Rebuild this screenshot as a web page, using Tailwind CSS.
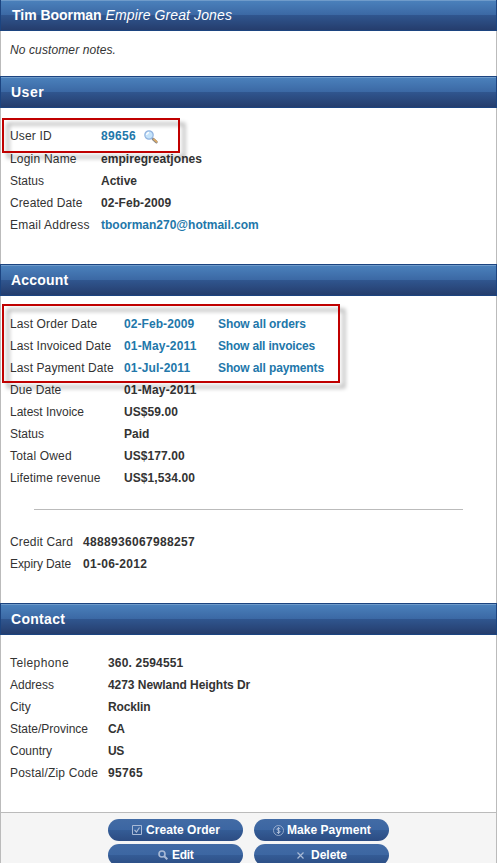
<!DOCTYPE html>
<html lang="en">
<head>
<meta charset="utf-8">
<title>Tim Boorman</title>
<script src="https://cdn.jsdelivr.net/npm/@tailwindcss/browser@4"></script>
</head>
<body class="bg-white">
<div class="h-[863px] w-[497px] overflow-hidden">
<main class="relative h-[872px] w-[497px] flex flex-col border-x border-[#bbbbbb] font-['Liberation_Sans',Arial,sans-serif] text-[12px] leading-[22px] text-[#333333]">
  <h1 class="-mx-px h-[31px] shrink-0 border-x border-b border-[#1c4480] bg-[linear-gradient(to_bottom,#6f9bca_0_1px,#4a80bb_1px,#3b68a4_15px,#30568f_15px,#253d6d_100%)] pl-[11px] text-[14px] leading-[30px] text-white"><b class="tracking-[-0.03px]">Tim Boorman</b> <i class="tracking-[0.11px]">Empire Great Jones</i></h1>
  <section class="h-[45px] shrink-0 pl-[9px] pt-[8px] italic tracking-[0.11px]">No customer notes.</section>

  <h2 class="-mx-px h-[32px] shrink-0 border border-[#1c4480] bg-[linear-gradient(to_bottom,#6f9bca_0_1px,#4a80bb_1px,#3b68a4_15px,#30568f_15px,#253d6d_100%)] pl-[10px] text-[14px] leading-[31px] font-bold text-white tracking-[0.5px]">User</h2>
  <section class="h-[156px] shrink-0 pl-[9px] pt-[17px]">
    <dl class="grid grid-cols-[91px_auto] grid-rows-[23px_22px_22px_22px_22px]">
      <dt class="tracking-[0.15px]">User ID</dt>
      <dd class="flex font-bold text-[#2277aa] tracking-[0.33px]">89656
        <svg class="ml-[8px] mt-[5px]" width="15" height="15" viewBox="0 0 15 15"><path d="M9 9l3.3 3" stroke="#888" stroke-width="2.8" stroke-linecap="round"/><path d="M10 9.3l2.6 2.4" stroke="#dca964" stroke-width="1.8" stroke-linecap="round"/><circle cx="5" cy="5" r="4.2" fill="#c5e3fa" stroke="#91b3df" stroke-width="1.2"/><path d="M2.6 5Q2.8 2.8 5 2.5" fill="none" stroke="#fff" stroke-width="1.3"/></svg>
      </dd>
      <dt class="tracking-[0.2px]">Login Name</dt><dd class="font-bold tracking-[0.06px]">empiregreatjones</dd>
      <dt>Status</dt><dd class="font-bold">Active</dd>
      <dt class="tracking-[0.1px]">Created Date</dt><dd class="font-bold tracking-[0.07px]">02-Feb-2009</dd>
      <dt class="tracking-[0.23px]">Email Address</dt><dd class="font-bold text-[#2277aa]">tboorman270@hotmail.com</dd>
    </dl>
  </section>

  <h2 class="-mx-px h-[32px] shrink-0 border border-[#1c4480] bg-[linear-gradient(to_bottom,#6f9bca_0_1px,#4a80bb_1px,#3b68a4_15px,#30568f_15px,#253d6d_100%)] pl-[10px] text-[14px] leading-[31px] font-bold text-white tracking-[0.2px]">Account</h2>
  <section class="h-[307px] shrink-0 pl-[9px] pt-[17px]">
    <dl class="grid grid-cols-[114px_94px_auto] auto-rows-[22px]">
      <dt class="tracking-[0.12px]">Last Order Date</dt><dd class="font-bold text-[#2277aa] tracking-[0.07px]">02-Feb-2009</dd><dd class="font-bold text-[#2277aa] tracking-[-0.1px]">Show all orders</dd>
      <dt class="tracking-[0.1px]">Last Invoiced Date</dt><dd class="font-bold text-[#2277aa] tracking-[0.16px]">01-May-2011</dd><dd class="font-bold text-[#2277aa] tracking-[-0.18px]">Show all invoices</dd>
      <dt class="tracking-[0.1px]">Last Payment Date</dt><dd class="font-bold text-[#2277aa] tracking-[0.14px]">01-Jul-2011</dd><dd class="font-bold text-[#2277aa] tracking-[-0.12px]">Show all payments</dd>
      <dt class="tracking-[0.08px]">Due Date</dt><dd class="col-span-2 font-bold tracking-[0.16px]">01-May-2011</dd>
      <dt>Latest Invoice</dt><dd class="col-span-2 font-bold tracking-[0.08px]">US$59.00</dd>
      <dt>Status</dt><dd class="col-span-2 font-bold">Paid</dd>
      <dt class="tracking-[0.18px]">Total Owed</dt><dd class="col-span-2 font-bold tracking-[0.08px]">US$177.00</dd>
      <dt class="tracking-[0.12px]">Lifetime revenue</dt><dd class="col-span-2 font-bold tracking-[0.08px]">US$1,534.00</dd>
    </dl>
    <hr class="ml-[24px] mt-[20px] w-[429px] border-[#bbbbbb]">
    <dl class="mt-[21px] grid grid-cols-[73px_auto] auto-rows-[22px]">
      <dt class="tracking-[0.16px]">Credit Card</dt><dd class="font-bold tracking-[0.33px]">4888936067988257</dd>
      <dt class="tracking-[-0.09px]">Expiry Date</dt><dd class="font-bold tracking-[0.28px]">01-06-2012</dd>
    </dl>
  </section>

  <h2 class="-mx-px h-[32px] shrink-0 border border-[#1c4480] bg-[linear-gradient(to_bottom,#6f9bca_0_1px,#4a80bb_1px,#3b68a4_15px,#30568f_15px,#253d6d_100%)] pl-[10px] text-[14px] leading-[31px] font-bold text-white tracking-[0.3px]">Contact</h2>
  <section class="h-[177px] shrink-0 pl-[9px] pt-[17px]">
    <dl class="grid grid-cols-[98px_auto] auto-rows-[22px]">
      <dt class="tracking-[0.4px]">Telephone</dt><dd class="font-bold tracking-[0.17px]">360. 2594551</dd>
      <dt>Address</dt><dd class="font-bold tracking-[-0.05px]">4273 Newland Heights Dr</dd>
      <dt>City</dt><dd class="font-bold tracking-[-0.12px]">Rocklin</dd>
      <dt>State/Province</dt><dd class="font-bold tracking-[-0.4px]">CA</dd>
      <dt>Country</dt><dd class="font-bold tracking-[-0.4px]">US</dd>
      <dt class="tracking-[0.18px]">Postal/Zip Code</dt><dd class="font-bold tracking-[0.33px]">95765</dd>
    </dl>
  </section>

  <footer class="grid h-[60px] shrink-0 grid-cols-[135px_135px] auto-rows-[22px] content-start justify-start gap-x-[11px] gap-y-[3px] border-t border-[#bbbbbb] bg-[#f5f5f5] pl-[107px] pt-[6px] font-bold text-white">
    <button class="flex items-center justify-start rounded-full bg-[linear-gradient(to_bottom,#426ba5_0,#3c66a2_50%,#345c96_50%,#2c4c82_100%)] pl-[24px]"><svg class="mr-[4px]" width="10" height="10" viewBox="0 0 10 10" fill="none" stroke="#a9bad6"><path d="M.5.5h9v9h-9z"/><path d="M2.5 5l2 2 3-4.5" stroke-width="1.2"/></svg><span class="tracking-[0.05px]">Create Order</span></button>
    <button class="flex items-center justify-start rounded-full bg-[linear-gradient(to_bottom,#426ba5_0,#3c66a2_50%,#345c96_50%,#2c4c82_100%)] pl-[19px]"><svg class="mr-[3px]" width="11" height="11" viewBox="0 0 11 11" fill="none" stroke="#a9bad6"><circle cx="5.5" cy="5.5" r="5" stroke-width=".8"/><path d="M7.2 3.7Q5.5 2.6 4.2 3.6T5.5 5.5 6.8 7.4 3.8 7.3M5.5 2v7"/></svg><span class="tracking-[0.04px]">Make Payment</span></button>
    <button class="flex items-center justify-start rounded-full bg-[linear-gradient(to_bottom,#426ba5_0,#3c66a2_50%,#345c96_50%,#2c4c82_100%)] pl-[50px]"><svg class="mr-[4px]" width="10" height="10" viewBox="0 0 10 10" fill="none" stroke="#a9bad6"><circle cx="4" cy="4" r="3" stroke-width="1.6"/><path d="M6.3 6.3L9.3 9.3" stroke-width="2"/></svg><span class="tracking-[-0.3px]">Edit</span></button>
    <button class="flex items-center justify-start rounded-full bg-[linear-gradient(to_bottom,#426ba5_0,#3c66a2_50%,#345c96_50%,#2c4c82_100%)] pl-[43px]"><svg class="mr-[7px]" width="7" height="7" viewBox="0 0 7 7" fill="none" stroke="#a9bad6"><path d="M.5.5l6 6M6.5.5l-6 6" stroke-width="1.2"/></svg><span>Delete</span></button>
  </footer>

  <!-- Callout frames over the user ID and the order history links -->
  <div class="absolute left-px top-[118px] h-[35px] w-[178px] border-2 border-[#c00000] drop-shadow-[5px_5px_2px_rgba(0,0,0,0.4)]"></div>
  <div class="absolute left-px top-[304px] h-[79px] w-[338px] border-2 border-[#c00000] drop-shadow-[5px_5px_2px_rgba(0,0,0,0.4)]"></div>
</main>
</div>
</body>
</html>
